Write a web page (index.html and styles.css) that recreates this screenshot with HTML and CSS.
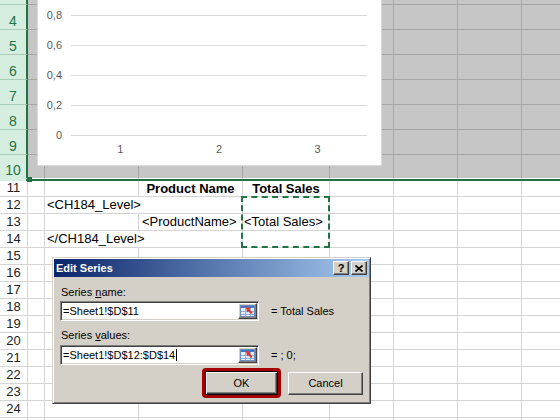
FILE: index.html
```html
<!DOCTYPE html>
<html>
<head>
<meta charset="utf-8">
<link rel="stylesheet" href="styles.css">
</head>
<body>
<div class="sheet">
  <div class="row sel r3"><div class="hd"></div><div class="c ca"></div><div class="c cb"></div><div class="c cc"></div><div class="c cd"></div><div class="c ce"></div><div class="c ce"></div><div class="c ce"></div><div class="c ce"></div></div>
  <div class="row sel rt"><div class="hd">4</div><div class="c ca"></div><div class="c cb"></div><div class="c cc"></div><div class="c cd"></div><div class="c ce"></div><div class="c ce"></div><div class="c ce"></div><div class="c ce"></div></div>
  <div class="row sel rt"><div class="hd">5</div><div class="c ca"></div><div class="c cb"></div><div class="c cc"></div><div class="c cd"></div><div class="c ce"></div><div class="c ce"></div><div class="c ce"></div><div class="c ce"></div></div>
  <div class="row sel rt"><div class="hd">6</div><div class="c ca"></div><div class="c cb"></div><div class="c cc"></div><div class="c cd"></div><div class="c ce"></div><div class="c ce"></div><div class="c ce"></div><div class="c ce"></div></div>
  <div class="row sel rt"><div class="hd">7</div><div class="c ca"></div><div class="c cb"></div><div class="c cc"></div><div class="c cd"></div><div class="c ce"></div><div class="c ce"></div><div class="c ce"></div><div class="c ce"></div></div>
  <div class="row sel rt"><div class="hd">8</div><div class="c ca"></div><div class="c cb"></div><div class="c cc"></div><div class="c cd"></div><div class="c ce"></div><div class="c ce"></div><div class="c ce"></div><div class="c ce"></div></div>
  <div class="row sel rt"><div class="hd">9</div><div class="c ca"></div><div class="c cb"></div><div class="c cc"></div><div class="c cd"></div><div class="c ce"></div><div class="c ce"></div><div class="c ce"></div><div class="c ce"></div></div>
  <div class="row sel r10"><div class="hd">10</div><div class="c ca"></div><div class="c cb"></div><div class="c cc"></div><div class="c cd"></div><div class="c ce"></div><div class="c ce"></div><div class="c ce"></div><div class="c ce"></div></div>
  <div class="gline"><div class="gline-hd"></div><div class="gline-bar"></div></div>
  <div class="row r11"><div class="hd">11</div><div class="c ca"></div><div class="c cb"></div><div class="c cc txt bold center">Product Name</div><div class="c cd txt bold center">Total Sales</div><div class="c ce"></div><div class="c ce"></div><div class="c ce"></div><div class="c ce"></div></div>
  <div class="row"><div class="hd">12</div><div class="c ca"></div><div class="c cb txt nob">&lt;CH184_Level&gt;</div><div class="c cc"></div><div class="c cd"></div><div class="c ce"></div><div class="c ce"></div><div class="c ce"></div><div class="c ce"></div></div>
  <div class="row"><div class="hd">13</div><div class="c ca"></div><div class="c cb"></div><div class="c cc txt pad3">&lt;ProductName&gt;</div><div class="c cd txt pad1">&lt;Total Sales&gt;</div><div class="c ce"></div><div class="c ce"></div><div class="c ce"></div><div class="c ce"></div></div>
  <div class="row"><div class="hd">14</div><div class="c ca"></div><div class="c cb txt nob">&lt;/CH184_Level&gt;</div><div class="c cc"></div><div class="c cd"></div><div class="c ce"></div><div class="c ce"></div><div class="c ce"></div><div class="c ce"></div></div>
  <div class="row"><div class="hd">15</div><div class="c ca"></div><div class="c cb"></div><div class="c cc"></div><div class="c cd"></div><div class="c ce"></div><div class="c ce"></div><div class="c ce"></div><div class="c ce"></div></div>
  <div class="row"><div class="hd">16</div><div class="c ca"></div><div class="c cb"></div><div class="c cc"></div><div class="c cd"></div><div class="c ce"></div><div class="c ce"></div><div class="c ce"></div><div class="c ce"></div></div>
  <div class="row"><div class="hd">17</div><div class="c ca"></div><div class="c cb"></div><div class="c cc"></div><div class="c cd"></div><div class="c ce"></div><div class="c ce"></div><div class="c ce"></div><div class="c ce"></div></div>
  <div class="row"><div class="hd">18</div><div class="c ca"></div><div class="c cb"></div><div class="c cc"></div><div class="c cd"></div><div class="c ce"></div><div class="c ce"></div><div class="c ce"></div><div class="c ce"></div></div>
  <div class="row"><div class="hd">19</div><div class="c ca"></div><div class="c cb"></div><div class="c cc"></div><div class="c cd"></div><div class="c ce"></div><div class="c ce"></div><div class="c ce"></div><div class="c ce"></div></div>
  <div class="row"><div class="hd">20</div><div class="c ca"></div><div class="c cb"></div><div class="c cc"></div><div class="c cd"></div><div class="c ce"></div><div class="c ce"></div><div class="c ce"></div><div class="c ce"></div></div>
  <div class="row"><div class="hd">21</div><div class="c ca"></div><div class="c cb"></div><div class="c cc"></div><div class="c cd"></div><div class="c ce"></div><div class="c ce"></div><div class="c ce"></div><div class="c ce"></div></div>
  <div class="row"><div class="hd">22</div><div class="c ca"></div><div class="c cb"></div><div class="c cc"></div><div class="c cd"></div><div class="c ce"></div><div class="c ce"></div><div class="c ce"></div><div class="c ce"></div></div>
  <div class="row"><div class="hd">23</div><div class="c ca"></div><div class="c cb"></div><div class="c cc"></div><div class="c cd"></div><div class="c ce"></div><div class="c ce"></div><div class="c ce"></div><div class="c ce"></div></div>
  <div class="row"><div class="hd">24</div><div class="c ca"></div><div class="c cb"></div><div class="c cc"></div><div class="c cd"></div><div class="c ce"></div><div class="c ce"></div><div class="c ce"></div><div class="c ce"></div></div>
  <div class="row"><div class="hd"></div><div class="c ca"></div><div class="c cb"></div><div class="c cc"></div><div class="c cd"></div><div class="c ce"></div><div class="c ce"></div><div class="c ce"></div><div class="c ce"></div></div>

  <div class="chart">
    <div class="yrow"><span class="ylbl">0,8</span><span class="yline"></span></div>
    <div class="yrow"><span class="ylbl">0,6</span><span class="yline"></span></div>
    <div class="yrow"><span class="ylbl">0,4</span><span class="yline"></span></div>
    <div class="yrow"><span class="ylbl">0,2</span><span class="yline"></span></div>
    <div class="yrow"><span class="ylbl">0</span><span class="yline"></span></div>
    <div class="xrow"><span>1</span><span>2</span><span>3</span></div>
  </div>

  <div class="handle"></div>
  <div class="marquee"></div>

  <div class="dialog">
    <div class="titlebar">
      <span class="title">Edit Series</span>
      <span class="tbtns">
        <span class="tbtn">?</span>
        <span class="tbtn"><svg width="8" height="7" viewBox="0 0 8 7"><path d="M0.5 0.5L7.5 6.5M7.5 0.5L0.5 6.5" stroke="#000" stroke-width="1.6"/></svg></span>
      </span>
    </div>
    <div class="dbody">
      <div class="lbl">Series <u>n</u>ame:</div>
      <div class="frow">
        <div class="field"><span class="ftext">=Sheet1!$D$11</span><span class="rbtn"><svg width="15" height="12" viewBox="0 0 15 12"><rect x="0.5" y="0.5" width="14" height="11" fill="#e3ecf7" stroke="#6d8cbc"/><rect x="1" y="1" width="13" height="2" fill="#4775bf"/><path d="M1 6.5H14M1 9.5H14M5.5 3V11.5M10.5 3V11.5" stroke="#8eaed8"/><path d="M6 2L10.5 3.5L9.6 4.8L12.5 7.6L11 9L8.2 6.2L7.2 7.5Z" fill="#e2331f"/></svg></span></div>
        <span class="result">= Total Sales</span>
      </div>
      <div class="lbl lbl2">Series <u>v</u>alues:</div>
      <div class="frow frow2">
        <div class="field"><span class="ftext"><span class="caret">=Sheet1!$D$12:$D$14</span></span><span class="rbtn"><svg width="15" height="12" viewBox="0 0 15 12"><rect x="0.5" y="0.5" width="14" height="11" fill="#e3ecf7" stroke="#6d8cbc"/><rect x="1" y="1" width="13" height="2" fill="#4775bf"/><path d="M1 6.5H14M1 9.5H14M5.5 3V11.5M10.5 3V11.5" stroke="#8eaed8"/><path d="M6 2L10.5 3.5L9.6 4.8L12.5 7.6L11 9L8.2 6.2L7.2 7.5Z" fill="#e2331f"/></svg></span></div>
        <span class="result">= ; 0;</span>
      </div>
      <div class="brow">
        <span class="okring"><span class="btn default">OK</span></span>
        <span class="btn cancel">Cancel</span>
      </div>
    </div>
  </div>
</div>
</body>
</html>
```

FILE: styles.css
```css
html, body {
  margin: 0;
  padding: 0;
  background: #ffffff;
}
body {
  width: 560px;
  height: 420px;
  overflow: hidden;
}
.sheet {
  position: relative;
  width: 560px;
  height: 420px;
  overflow: hidden;
  font-family: "Liberation Sans", Arial, sans-serif;
}
.row {
  display: flex;
  height: 17px;
}
.row.r3 { height: 5px; }
.row.rt { height: 25px; }
.row.r10 { height: 24px; }
.row.r11 { height: 16px; }

.hd {
  flex: none;
  width: 28px;
  box-sizing: border-box;
  border-right: 1px solid #d4d4d4;
  border-bottom: 1px solid #d4d4d4;
  display: flex;
  align-items: flex-end;
  justify-content: center;
  font-size: 13px;
  line-height: 16px;
  color: #222222;
  overflow: hidden;
}
.sel .hd {
  background: #d6eedf;
  color: #217346;
  border-right: 2px solid #217346;
  border-bottom-color: #a9cdb8;
  font-size: 14px;
}
.r10 .hd { border-bottom-color: #d6eedf; }

.c {
  flex: none;
  box-sizing: border-box;
  border-right: 1px solid #d4d4d4;
  border-bottom: 1px solid #d4d4d4;
}
.sel .c {
  background: #c6c6c6;
  border-right-color: #a6a6a6;
  border-bottom-color: #a6a6a6;
}
.r10 .c { border-bottom-color: #ffffff; }
.ca { width: 17px; }
.cb { width: 94px; }
.cc { width: 104px; }
.cd { width: 87px; }
.ce { width: 64px; }

.txt {
  font-size: 13px;
  line-height: 16px;
  color: #000000;
  white-space: nowrap;
  overflow: visible;
  padding-left: 2px;
  position: relative;
  z-index: 1;
}
.bold { font-weight: bold; }
.center { text-align: center; padding-left: 0; }
.pad3 { padding-left: 3px; }
.pad1 { padding-left: 1px; }
.nob { border-right-color: transparent; }

.gline {
  display: flex;
  height: 2px;
}
.gline-hd {
  width: 26px;
  background: #d6eedf;
}
.gline-bar {
  flex: 1;
  background: #217346;
}

/* chart overlay */
.chart {
  position: absolute;
  left: 37px;
  top: -21px;
  width: 345px;
  height: 187px;
  box-sizing: border-box;
  background: #ffffff;
  border: 1px solid #d9d9d9;
  padding: 20px 14px 9px 0;
  z-index: 2;
}
.yrow {
  display: flex;
  align-items: center;
  height: 30px;
}
.ylbl {
  flex: none;
  width: 24px;
  text-align: right;
  font-size: 11px;
  line-height: 14px;
  color: #595959;
}
.yline {
  flex: 1;
  height: 1px;
  margin-left: 9px;
  background: #d9d9d9;
}
.xrow {
  display: flex;
  margin: -8px 0 0 33px;
  height: 14px;
}
.xrow span {
  flex: 1;
  text-align: center;
  font-size: 11px;
  line-height: 14px;
  color: #595959;
}

.handle {
  position: absolute;
  left: 27px;
  top: 177px;
  width: 5px;
  height: 5px;
  background: #217346;
  z-index: 3;
}
.marquee {
  position: absolute;
  left: 241px;
  top: 196px;
  width: 89px;
  height: 52px;
  box-sizing: border-box;
  border: 2px dashed #217346;
  z-index: 3;
}

/* dialog */
.dialog {
  position: absolute;
  left: 52px;
  top: 257px;
  width: 319px;
  height: 147px;
  box-sizing: border-box;
  background: #d4d0c8;
  border: 1px solid;
  border-color: #d4d0c8 #404040 #404040 #d4d0c8;
  box-shadow: inset 1px 1px 0 #ffffff, inset -1px -1px 0 #808080;
  padding: 1px;
  z-index: 4;
  font-size: 11px;
  color: #000000;
}
.titlebar {
  height: 18px;
  display: flex;
  align-items: center;
  justify-content: space-between;
  padding: 0 2px 0 2px;
  background: linear-gradient(to right, #0a246a, #a6caf0);
}
.title {
  color: #ffffff;
  font-weight: bold;
  font-size: 11px;
  line-height: 14px;
}
.tbtns {
  display: flex;
  gap: 2px;
}
.tbtn {
  width: 16px;
  height: 14px;
  box-sizing: border-box;
  background: #d4d0c8;
  border: 1px solid;
  border-color: #ffffff #404040 #404040 #ffffff;
  box-shadow: inset -1px -1px 0 #808080;
  display: flex;
  align-items: center;
  justify-content: center;
  font-weight: bold;
  font-size: 11px;
  line-height: 12px;
}
.dbody {
  padding: 0 6px 0 6px;
}
.lbl {
  margin-top: 8px;
  padding-left: 1px;
  line-height: 14px;
}
.lbl2 { margin-top: 7px; }
.frow {
  display: flex;
  align-items: center;
  margin-top: 2px;
}
.frow2 { margin-top: 3px; }
.field {
  width: 199px;
  height: 20px;
  box-sizing: border-box;
  background: #ffffff;
  border: 1px solid;
  border-color: #808080 #ffffff #ffffff #808080;
  box-shadow: inset 1px 1px 0 #404040, inset -1px -1px 0 #d4d0c8;
  display: flex;
  align-items: center;
  padding: 1px 1px 1px 2px;
}
.ftext {
  flex: 1;
  line-height: 14px;
  white-space: nowrap;
}
.caret {
  border-right: 1px solid #000000;
  padding-right: 1px;
}
.rbtn {
  width: 19px;
  height: 16px;
  box-sizing: border-box;
  background: #d4d0c8;
  border: 1px solid;
  border-color: #ffffff #404040 #404040 #ffffff;
  box-shadow: inset -1px -1px 0 #808080;
  display: flex;
  align-items: center;
  justify-content: center;
}
.result {
  margin-left: 12px;
  line-height: 14px;
}
.brow {
  display: flex;
  justify-content: flex-end;
  align-items: center;
  gap: 7px;
  margin-top: 3px;
}
.okring {
  display: flex;
  border: 3px solid #a40000;
  border-radius: 4px;
}
.btn {
  box-sizing: border-box;
  width: 75px;
  height: 23px;
  background: #d4d0c8;
  border: 1px solid;
  border-color: #ffffff #404040 #404040 #ffffff;
  box-shadow: inset -1px -1px 0 #808080;
  display: flex;
  align-items: center;
  justify-content: center;
  font-size: 11px;
}
.btn.default {
  width: 73px;
  height: 24px;
  border-color: #000000;
  box-shadow: inset 1px 1px 0 #ffffff, inset -1px -1px 0 #404040, inset -2px -2px 0 #808080;
}
```
